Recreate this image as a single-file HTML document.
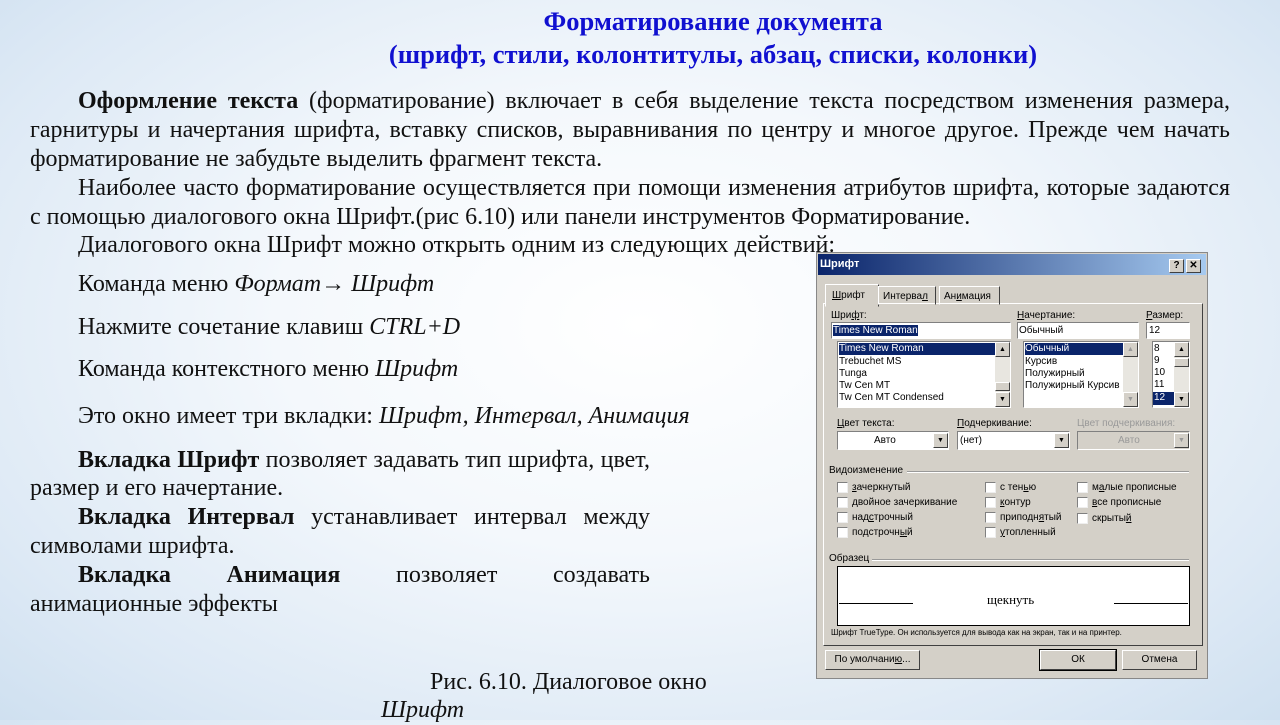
<!DOCTYPE html>
<html><head><meta charset="utf-8"><style>
body{margin:0;width:1280px;height:720px;overflow:hidden;position:relative;
background:radial-gradient(ellipse at 50% 45%,#ffffff 0%,#f4f8fc 40%,#dde9f5 80%,#cfe0f0 100%);
font-family:"Liberation Serif",serif;color:#111;}
.a{position:absolute;white-space:nowrap}
.t{font-size:24px;line-height:29px}
.j{position:absolute;white-space:nowrap;text-align:justify;text-align-last:justify;font-size:24px;line-height:29px}
h1{position:absolute;margin:0;font-size:26.5px;font-weight:bold;color:#1010d0;text-align:center;line-height:33px}
.d{position:absolute;left:816px;top:252px;width:392px;height:427px;background:#d4d0c8;border:1px solid #888;font-family:"Liberation Sans",sans-serif;font-size:10px;color:#000;box-sizing:border-box}
.d .a{font-size:10px}
.w{position:absolute;background:#fff;border:1px solid;border-color:#808080 #fff #fff #808080;box-sizing:border-box}
.cb{position:absolute;width:11px;height:11px;background:#fff;border:1px solid;border-color:#808080 #eee #eee #808080;box-sizing:border-box}
.btn{position:absolute;border:1px solid;border-color:#fff #404040 #404040 #fff;box-sizing:border-box;text-align:center;line-height:17px;font-size:10px}
.sb{position:absolute;background:#e8e6e0;}
.ar{position:absolute;width:15px;height:15px;background:#d4d0c8;border:1px solid;border-color:#fff #404040 #404040 #fff;box-sizing:border-box;font-size:7px;text-align:center;line-height:13px}
.sel{background:#0a246a;color:#fff}
</style></head><body>
<h1 style="left:300px;width:826px;top:5px">Форматирование документа<br>(шрифт, стили, колонтитулы, абзац, списки, колонки)</h1>
<div class="j" style="left:30px;top:87px;width:1200px"><span style="display:inline-block;width:48px"></span><b>Оформление текста</b> (форматирование) включает в себя выделение текста посредством изменения размера,</div>
<div class="j" style="left:30px;top:116px;width:1200px">гарнитуры и начертания шрифта, вставку списков, выравнивания по центру и многое другое. Прежде чем начать</div>
<div class="a t" style="left:30px;top:145px">форматирование не забудьте выделить фрагмент текста.</div>
<div class="j" style="left:78px;top:174px;width:1152px">Наиболее часто форматирование осуществляется при помощи изменения атрибутов шрифта, которые задаются</div>
<div class="a t" style="left:30px;top:203px">с помощью диалогового окна Шрифт.(рис 6.10) или панели инструментов Форматирование.</div>
<div class="a t" style="left:78px;top:231px">Диалогового окна Шрифт можно открыть одним из следующих действий:</div>
<div class="a t" style="left:78px;top:270px">Команда меню <i>Формат→ Шрифт</i></div>
<div class="a t" style="left:78px;top:313px">Нажмите сочетание клавиш <i>CTRL+D</i></div>
<div class="a t" style="left:78px;top:355px">Команда контекстного меню <i>Шрифт</i></div>
<div class="a t" style="left:78px;top:402px">Это окно имеет три вкладки: <i>Шрифт, Интервал, Анимация</i></div>
<div class="j" style="left:78px;top:446px;width:572px"><b>Вкладка Шрифт</b> позволяет задавать тип шрифта, цвет,</div>
<div class="a t" style="left:30px;top:474px">размер и его начертание.</div>
<div class="j" style="left:78px;top:503px;width:572px"><b>Вкладка Интервал</b> устанавливает интервал между</div>
<div class="a t" style="left:30px;top:532px">символами шрифта.</div>
<div class="j" style="left:78px;top:561px;width:572px"><b>Вкладка Анимация</b> позволяет создавать</div>
<div class="a t" style="left:30px;top:590px">анимационные эффекты</div>
<div class="a t" style="left:430px;top:668px">Рис. 6.10. Диалоговое окно</div>
<div class="a t" style="left:381px;top:696px"><i>Шрифт</i></div>

<div class="d">
 <div style="position:absolute;left:1px;top:1px;right:1px;height:21px;background:linear-gradient(90deg,#0a246a,#a6caf0)"></div>
 <div class="a" style="left:3px;top:5px;color:#fff;font-weight:bold;font-size:11px">Шрифт</div>
 <div class="btn" style="left:352px;top:6px;width:15px;height:14px;background:#d4d0c8;line-height:12px;font-weight:bold">?</div>
 <div class="btn" style="left:369px;top:6px;width:15px;height:14px;background:#d4d0c8;line-height:12px;font-weight:bold">✕</div>
 <div style="position:absolute;left:6px;top:50px;width:378px;height:341px;border:1px solid;border-color:#fff #404040 #404040 #fff"></div>
 <div style="position:absolute;left:8px;top:31px;width:52px;height:21px;background:#d4d0c8;border:1px solid;border-color:#fff #404040 transparent #fff"></div>
 <div class="a" style="left:15px;top:37px"><u>Ш</u>рифт</div>
 <div style="position:absolute;left:61px;top:33px;width:56px;height:17px;border:1px solid;border-color:#fff #404040 transparent #fff"></div>
 <div class="a" style="left:66px;top:38px">Интерва<u>л</u></div>
 <div style="position:absolute;left:122px;top:33px;width:59px;height:17px;border:1px solid;border-color:#fff #404040 transparent #fff"></div>
 <div class="a" style="left:127px;top:38px">Ан<u>и</u>мация</div>
 <div class="a" style="left:14px;top:57px">Шри<u>ф</u>т:</div>
 <div class="a" style="left:200px;top:57px"><u>Н</u>ачертание:</div>
 <div class="a" style="left:329px;top:57px"><u>Р</u>азмер:</div>
 <div class="w" style="left:14px;top:69px;width:180px;height:17px"><span class="a sel" style="left:1px;top:2px">Times New Roman</span></div>
 <div class="w" style="left:200px;top:69px;width:122px;height:17px"><span class="a" style="left:1px;top:2px">Обычный</span></div>
 <div class="w" style="left:329px;top:69px;width:44px;height:17px"><span class="a" style="left:2px;top:2px">12</span></div>
 <div class="w" style="left:20px;top:88px;width:174px;height:67px">
  <div class="a sel" style="left:1px;top:1px;width:156px;height:12px;line-height:12px">Times New Roman</div>
  <div class="a" style="left:1px;top:14px;line-height:12px">Trebuchet MS<br>Tunga<br>Tw Cen MT<br>Tw Cen MT Condensed</div>
  <div class="sb" style="left:157px;top:0;width:15px;height:65px"></div>
  <div class="ar" style="left:157px;top:0">▲</div><div class="ar" style="left:157px;top:50px">▼</div>
  <div class="ar" style="left:157px;top:40px;height:9px"></div>
 </div>
 <div class="w" style="left:206px;top:88px;width:116px;height:67px">
  <div class="a sel" style="left:1px;top:1px;width:99px;height:12px;line-height:12px">Обычный</div>
  <div class="a" style="left:1px;top:14px;line-height:12px">Курсив<br>Полужирный<br>Полужирный Курсив</div>
  <div class="sb" style="left:99px;top:0;width:15px;height:65px"></div>
  <div class="ar" style="left:99px;top:0;color:#999">▲</div><div class="ar" style="left:99px;top:50px;color:#999">▼</div>
 </div>
 <div class="w" style="left:335px;top:88px;width:38px;height:67px">
  <div class="a" style="left:1px;top:1px;line-height:12px">8<br>9<br>10<br>11</div>
  <div class="a sel" style="left:0px;top:50px;width:20px;height:13px;line-height:12px;padding-left:1px">12</div>
  <div class="sb" style="left:21px;top:0;width:15px;height:65px"></div>
  <div class="ar" style="left:21px;top:0">▲</div><div class="ar" style="left:21px;top:50px">▼</div>
  <div class="ar" style="left:21px;top:16px;height:9px"></div>
 </div>
 <div class="a" style="left:20px;top:165px"><u>Ц</u>вет текста:</div>
 <div class="a" style="left:140px;top:165px"><u>П</u>одчеркивание:</div>
 <div class="a" style="left:260px;top:165px;color:#999">Цвет подчеркивания:</div>
 <div class="w" style="left:20px;top:178px;width:112px;height:19px"><span class="a" style="left:36px;top:3px">Авто</span><div class="ar" style="left:95px;top:1px">▼</div></div>
 <div class="w" style="left:140px;top:178px;width:113px;height:19px"><span class="a" style="left:2px;top:3px">(нет)</span><div class="ar" style="left:96px;top:1px">▼</div></div>
 <div class="w" style="left:260px;top:178px;width:113px;height:19px;background:#d4d0c8"><span class="a" style="left:40px;top:3px;color:#999">Авто</span><div class="ar" style="left:96px;top:1px;color:#999">▼</div></div>
 <div class="a" style="left:12px;top:212px">Видоизменение</div>
 <div style="position:absolute;left:90px;top:218px;width:282px;border-top:1px solid #999;border-bottom:1px solid #fff"></div>
 <div class="cb" style="left:20px;top:229px"></div><div class="a" style="left:35px;top:229px"><u>з</u>ачеркнутый</div>
 <div class="cb" style="left:20px;top:244px"></div><div class="a" style="left:35px;top:244px"><u>д</u>войное зачеркивание</div>
 <div class="cb" style="left:20px;top:259px"></div><div class="a" style="left:35px;top:259px">над<u>с</u>трочный</div>
 <div class="cb" style="left:20px;top:274px"></div><div class="a" style="left:35px;top:274px">подстрочн<u>ы</u>й</div>
 <div class="cb" style="left:168px;top:229px"></div><div class="a" style="left:183px;top:229px">с тен<u>ь</u>ю</div>
 <div class="cb" style="left:168px;top:244px"></div><div class="a" style="left:183px;top:244px"><u>к</u>онтур</div>
 <div class="cb" style="left:168px;top:259px"></div><div class="a" style="left:183px;top:259px">приподн<u>я</u>тый</div>
 <div class="cb" style="left:168px;top:274px"></div><div class="a" style="left:183px;top:274px"><u>у</u>топленный</div>
 <div class="cb" style="left:260px;top:229px"></div><div class="a" style="left:275px;top:229px">м<u>а</u>лые прописные</div>
 <div class="cb" style="left:260px;top:244px"></div><div class="a" style="left:275px;top:244px"><u>в</u>се прописные</div>
 <div class="cb" style="left:260px;top:260px"></div><div class="a" style="left:275px;top:260px">скрыты<u>й</u></div>
 <div class="a" style="left:12px;top:300px">Образец</div>
 <div style="position:absolute;left:55px;top:306px;width:317px;border-top:1px solid #999;border-bottom:1px solid #fff"></div>
 <div style="position:absolute;left:20px;top:313px;width:353px;height:60px;background:#fff;border:1px solid #000;box-sizing:border-box">
  <div style="position:absolute;left:1px;top:36px;width:74px;border-top:1px solid #000"></div>
  <div style="position:absolute;right:1px;top:36px;width:74px;border-top:1px solid #000"></div>
  <div class="a" style="left:149px;top:25px;font-family:'Liberation Serif',serif;font-size:13px">щекнуть</div>
 </div>
 <div class="a" style="left:14px;top:375px;font-size:8px">Шрифт TrueType. Он используется для вывода как на экран, так и на принтер.</div>
 <div class="btn" style="left:8px;top:397px;width:95px;height:20px">По умолчани<u>ю</u>...</div>
 <div class="btn" style="left:223px;top:397px;width:76px;height:20px;outline:1px solid #000">ОК</div>
 <div class="btn" style="left:305px;top:397px;width:75px;height:20px">Отмена</div>
</div>
</body></html>
